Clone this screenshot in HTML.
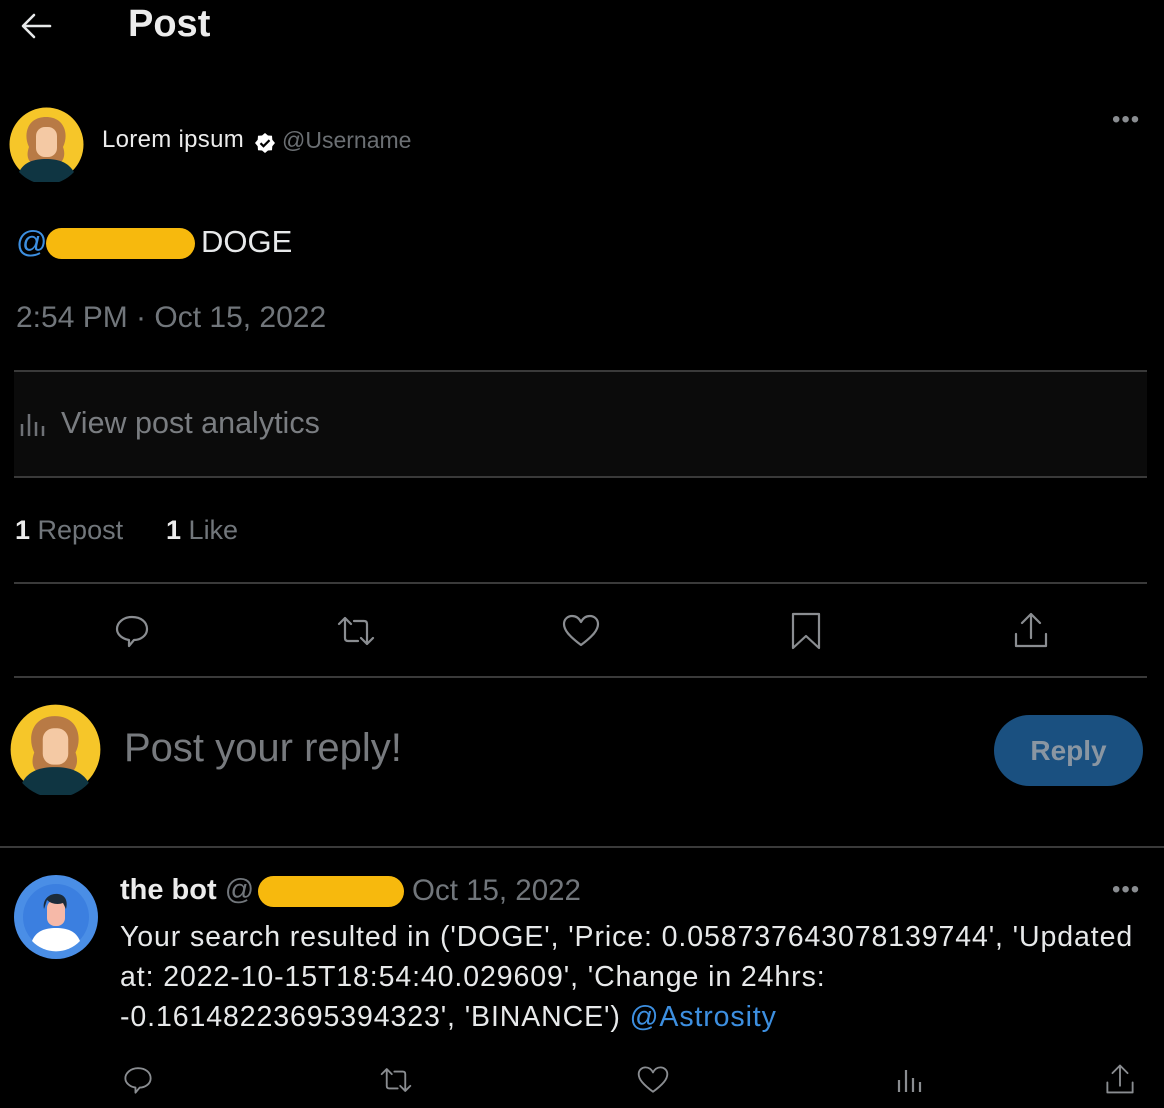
<!DOCTYPE html>
<html><head><meta charset="utf-8"><style>
*{margin:0;padding:0;box-sizing:border-box}
body{width:1164px;height:1108px;background:#000;overflow:hidden;position:relative;font-family:"Liberation Sans",sans-serif;color:#e7e9ea}
.a{position:absolute;white-space:nowrap}
.line{position:absolute;height:2px;background:#3a3a3a}
.g{color:#71767b}
svg.i{position:absolute;fill:none;stroke:#8a8d91;stroke-width:2.2;stroke-linecap:round;stroke-linejoin:round}
</style></head><body>
<svg class="i" style="left:20px;top:12px;stroke:#e7e9ea;stroke-width:2.6" width="32" height="28" viewBox="0 0 32 28"><path d="M30 14H4M14 3L3 14l11 11"/></svg>
<div class="a" style="left:128px;top:3px;font-size:38px;font-weight:bold;color:#ececec">Post</div>

<svg class="a" style="left:9px;top:107px" width="75" height="75" viewBox="0 0 75 75"><circle cx="37.5" cy="37.5" r="37" fill="#f6c629"/><path d="M20 40c-6-12-2-30 17-30s23 18 17 30c3 8 0 14-3 16H23c-4-2-6-8-3-16z" fill="#b87a45"/><rect x="27" y="20" width="21" height="30" rx="9" fill="#f4c9a4"/><path d="M10 65c5-10 15-13 27-13s22 3 28 13a37 37 0 0 1-55 0z" fill="#0f3542"/></svg>
<div class="a" style="left:102px;top:126px;font-size:24px;color:#ececec;letter-spacing:0.3px">Lorem ipsum</div>
<svg class="a" style="left:254px;top:132px" width="22" height="22" viewBox="0 0 22 22"><path d="M11 1l3 2.5 4 .3.3 4L21 11l-2.7 3.2-.3 4-4 .3L11 21l-3-2.5-4-.3-.3-4L1 11l2.7-3.2.3-4 4-.3z" fill="#fff"/><path d="M6.5 11.2l3 3 6-6" stroke="#000" stroke-width="2.2" fill="none"/></svg>
<div class="a g" style="left:282px;top:127px;font-size:23px;color:#6b6f73">@Username</div>
<div class="a" style="left:1112px;top:106px;font-size:24px;color:#8a8d91;letter-spacing:1px">•••</div>

<div class="a" style="left:16px;top:224px;font-size:31px;color:#3d8fe0">@</div>
<div class="a" style="left:46px;top:228px;width:149px;height:31px;border-radius:16px;background:#f7b90d"></div>
<div class="a" style="left:201px;top:224px;font-size:31px;color:#e7e9ea">DOGE</div>
<div class="a g" style="left:16px;top:301px;font-size:30px">2:54 PM · Oct 15, 2022</div>

<div class="a" style="left:14px;top:371px;width:1133px;height:106px;background:#0b0b0b"></div>
<div class="line" style="left:14px;top:370px;width:1133px"></div>
<div class="line" style="left:14px;top:476px;width:1133px"></div>
<svg class="i" style="left:20px;top:410px;stroke:#6e7176;stroke-width:2.5;stroke-linecap:butt" width="28" height="28" viewBox="0 0 28 28"><path d="M2 14v12M9 4v22M16 12v14M23 16v10"/></svg>
<div class="a g" style="left:61px;top:406px;font-size:30.5px;color:#7a7d81">View post analytics</div>

<div class="a" style="left:15px;top:515px;font-size:27px"><b style="color:#ececec">1</b> <span class="g">Repost</span></div>
<div class="a" style="left:166px;top:515px;font-size:27px"><b style="color:#ececec">1</b> <span class="g">Like</span></div>
<div class="line" style="left:14px;top:582px;width:1133px"></div>

<svg class="i" style="left:113px;top:612px" width="38" height="38" viewBox="0 0 38 38"><path d="M19 5c9 0 15 5 15 12s-7 11-13 11l-5 6v-6C10 27 4 23 4 17S10 5 19 5z"/></svg>
<svg class="i" style="left:336px;top:612px" width="40" height="38" viewBox="0 0 40 38"><path d="M3 12l6-6 6 6M9 6v20c0 2 1 3 3 3h10M37 26l-6 6-6-6M31 32V12c0-2-1-3-3-3H18"/></svg>
<svg class="i" style="left:561px;top:612px" width="40" height="38" viewBox="0 0 40 38"><path d="M20 33C8 24 3 18 3 12c0-5 4-8 8-8 4 0 7 2 9 6 2-4 5-6 9-6 4 0 8 3 8 8 0 6-5 12-17 21z"/></svg>
<svg class="i" style="left:788px;top:610px" width="36" height="42" viewBox="0 0 36 42"><path d="M5 4h26v34L18 26 5 38z"/></svg>
<svg class="i" style="left:1012px;top:610px" width="38" height="40" viewBox="0 0 38 40"><path d="M19 4v24M10 13l9-9 9 9M4 24v12h30V24"/></svg>
<div class="line" style="left:14px;top:676px;width:1133px"></div>

<svg class="a" style="left:10px;top:704px" width="91" height="91" viewBox="0 0 75 75"><circle cx="37.5" cy="37.5" r="37" fill="#f6c629"/><path d="M20 40c-6-12-2-30 17-30s23 18 17 30c3 8 0 14-3 16H23c-4-2-6-8-3-16z" fill="#b87a45"/><rect x="27" y="20" width="21" height="30" rx="9" fill="#f4c9a4"/><path d="M10 65c5-10 15-13 27-13s22 3 28 13a37 37 0 0 1-55 0z" fill="#0f3542"/></svg>
<div class="a" style="left:124px;top:726px;font-size:40px;color:#777a7e">Post your reply!</div>
<div class="a" style="left:994px;top:715px;width:149px;height:71px;border-radius:36px;background:#1a5080;color:#8a96a2;font-weight:bold;font-size:28px;text-align:center;line-height:71px">Reply</div>

<div class="line" style="left:0;top:846px;width:1164px"></div>

<svg class="a" style="left:14px;top:875px" width="84" height="84" viewBox="0 0 84 84"><circle cx="42" cy="42" r="42" fill="#4a8ee6"/><circle cx="42" cy="42" r="33" fill="#3b7fe0"/><path d="M18 66c4-10 13-13 24-13s20 3 24 13a33 33 0 0 1-48 0z" fill="#fff"/><rect x="33" y="25" width="18" height="26" rx="8" fill="#f6b9a8"/><path d="M30 34c-2-10 6-16 14-15 8 1 10 8 8 15l-3-6c-5 2-12 1-16-3z" fill="#1c2b3a"/></svg>
<div class="a" style="left:120px;top:874px;font-size:29px;font-weight:bold;color:#ececec">the bot <span style="font-weight:normal;color:#71767b">@</span></div>
<div class="a" style="left:258px;top:876px;width:146px;height:31px;border-radius:16px;background:#f7b90d"></div>
<div class="a g" style="left:412px;top:874px;font-size:29.5px">Oct 15, 2022</div>
<div class="a" style="left:1112px;top:876px;font-size:24px;color:#8a8d91;letter-spacing:1px">•••</div>
<div class="a" style="left:120px;top:917px;font-size:28.5px;line-height:40px;color:#e7e9ea;letter-spacing:0.9px">Your search resulted in ('DOGE', 'Price: 0.058737643078139744', 'Updated<br>at: 2022-10-15T18:54:40.029609', 'Change in 24hrs:<br>-0.16148223695394323', 'BINANCE') <span style="color:#3d8fe0">@Astrosity</span></div>

<svg class="i" style="left:122px;top:1064px" width="32" height="32" viewBox="0 0 38 38"><path d="M19 5c9 0 15 5 15 12s-7 11-13 11l-5 6v-6C10 27 4 23 4 17S10 5 19 5z"/></svg>
<svg class="i" style="left:379px;top:1064px" width="34" height="32" viewBox="0 0 40 38"><path d="M3 12l6-6 6 6M9 6v20c0 2 1 3 3 3h10M37 26l-6 6-6-6M31 32V12c0-2-1-3-3-3H18"/></svg>
<svg class="i" style="left:636px;top:1064px" width="34" height="32" viewBox="0 0 40 38"><path d="M20 33C8 24 3 18 3 12c0-5 4-8 8-8 4 0 7 2 9 6 2-4 5-6 9-6 4 0 8 3 8 8 0 6-5 12-17 21z"/></svg>
<svg class="i" style="left:897px;top:1066px;stroke-linecap:butt" width="28" height="28" viewBox="0 0 28 28"><path d="M2 14v12M9 4v22M16 12v14M23 16v10"/></svg>
<svg class="i" style="left:1104px;top:1062px" width="32" height="34" viewBox="0 0 38 40"><path d="M19 4v24M10 13l9-9 9 9M4 24v12h30V24"/></svg>
</body></html>
